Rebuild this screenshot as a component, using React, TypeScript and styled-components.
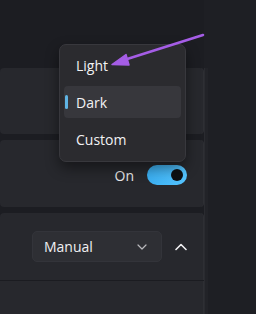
import React from "react";
import styled, { createGlobalStyle } from "styled-components";

const Global = createGlobalStyle`
  html, body { margin: 0; padding: 0; background: #1c1d23; }
  body { font-family: "Open Sans", "Noto Sans", sans-serif; }
`;

const Screen = styled.div`
  position: relative;
  width: 256px;
  height: 314px;
  overflow: hidden;
  display: flex;
  background: #1c1d23;
`;

const Main = styled.div`
  width: 204px;
  flex-shrink: 0;
  display: flex;
  flex-direction: column;
  padding-top: 68px;
  gap: 6px;
  background: #1c1d22;
`;

const Side = styled.div`
  flex: 1;
  display: flex;
  background: #1e1f24;
`;

const SideEdge = styled.div`
  width: 3px;
  margin-top: 68px;
  background: #222328;
  border-left: 1px solid #2a2b30;
`;

const Card = styled.div<{ $h: number; $top?: boolean; $bottom?: boolean }>`
  flex-shrink: 0;
  height: ${(p) => p.$h}px;
  background: #27282d;
  border-radius: ${(p) => (p.$top ? "4px 4px" : "0 0")} ${(p) => (p.$bottom ? "4px 4px" : "0 0")};
  border-right: 1px solid #2e2f34;
  display: flex;
  align-items: center;
  justify-content: flex-end;
  padding-right: 16px;
  box-sizing: border-box;
`;

const Group = styled.div`
  flex-shrink: 0;
  display: flex;
  flex-direction: column;
  gap: 1px;
  background: #1b1c21;
`;

const Label = styled.span`
  color: #e8e8ea;
  font-size: 14px;
  margin-right: 13px;
  margin-top: 3px;
`;

const Toggle = styled.div`
  width: 40px;
  height: 20px;
  border-radius: 10px;
  background: linear-gradient(90deg, #3aaef0, #55c4ff);
  display: flex;
  align-items: center;
  justify-content: flex-end;
  padding-right: 4px;
  box-sizing: border-box;
  margin-top: 3px;
`;

const Knob = styled.div`
  width: 12px;
  height: 12px;
  border-radius: 50%;
  background: #0e0f12;
`;

const Select = styled.div`
  width: 130px;
  height: 31px;
  background: #2e2f34;
  border: 1px solid #33343a;
  border-radius: 5px;
  box-sizing: border-box;
  display: flex;
  align-items: center;
  justify-content: space-between;
  padding: 0 14px 0 11px;
  color: #f0f0f2;
  font-size: 14px;
  margin-right: 13px;
`;

const Chev = styled.svg`
  display: block;
`;

const Menu = styled.div`
  position: absolute;
  left: 59px;
  top: 44px;
  width: 127px;
  height: 118px;
  box-sizing: border-box;
  background: #2b2b2f;
  border: 1px solid #38383d;
  border-radius: 7px;
  box-shadow: 0 6px 14px rgba(0, 0, 0, 0.45);
  padding: 4px 4px;
  display: flex;
  flex-direction: column;
  gap: 5px;
`;

const Item = styled.div<{ $active?: boolean }>`
  position: relative;
  height: 32px;
  border-radius: 4px;
  display: flex;
  align-items: center;
  padding-left: 12px;
  color: #f2f2f4;
  font-size: 14px;
  background: ${(p) => (p.$active ? "#37373c" : "transparent")};
`;

const Accent = styled.div`
  position: absolute;
  left: 1px;
  top: 9px;
  width: 3px;
  height: 14px;
  border-radius: 2px;
  background: #5fb4e4;
`;

const Arrow = styled.svg`
  position: absolute;
  left: 0;
  top: 0;
  pointer-events: none;
`;

export default function App() {
  return (
    <>
      <Global />
      <Screen>
        <Main>
          <Card $h={66} $top $bottom />
          <Card $h={67} $top $bottom>
            <Label>On</Label>
            <Toggle>
              <Knob />
            </Toggle>
          </Card>
          <Group>
            <Card $h={67} $top>
              <Select>
                <span>Manual</span>
                <Chev width="10" height="6" viewBox="0 0 10 6">
                  <path d="M1 1l4 4 4-4" fill="none" stroke="#b8b8bc" strokeWidth="1.2" strokeLinecap="round" strokeLinejoin="round" />
                </Chev>
              </Select>
              <Chev width="12" height="8" viewBox="0 0 12 8">
                <path d="M1 6.5l5-5 5 5" fill="none" stroke="#f0f0f2" strokeWidth="1.6" strokeLinecap="round" strokeLinejoin="round" />
              </Chev>
            </Card>
            <Card $h={40} />
          </Group>
        </Main>
        <Side>
          <SideEdge />
        </Side>
        <Menu>
          <Item>Light</Item>
          <Item $active>
            <Accent />
            Dark
          </Item>
          <Item>Custom</Item>
        </Menu>
        <Arrow width="256" height="314" viewBox="0 0 256 314">
          <line x1="203" y1="35" x2="124" y2="60" stroke="#a55de6" strokeWidth="2.6" strokeLinecap="round" />
          <path d="M112 64.5 L126 54.5 L129 65 Z" fill="#a55de6" stroke="#a55de6" strokeWidth="1.5" strokeLinejoin="round" />
        </Arrow>
      </Screen>
    </>
  );
}
